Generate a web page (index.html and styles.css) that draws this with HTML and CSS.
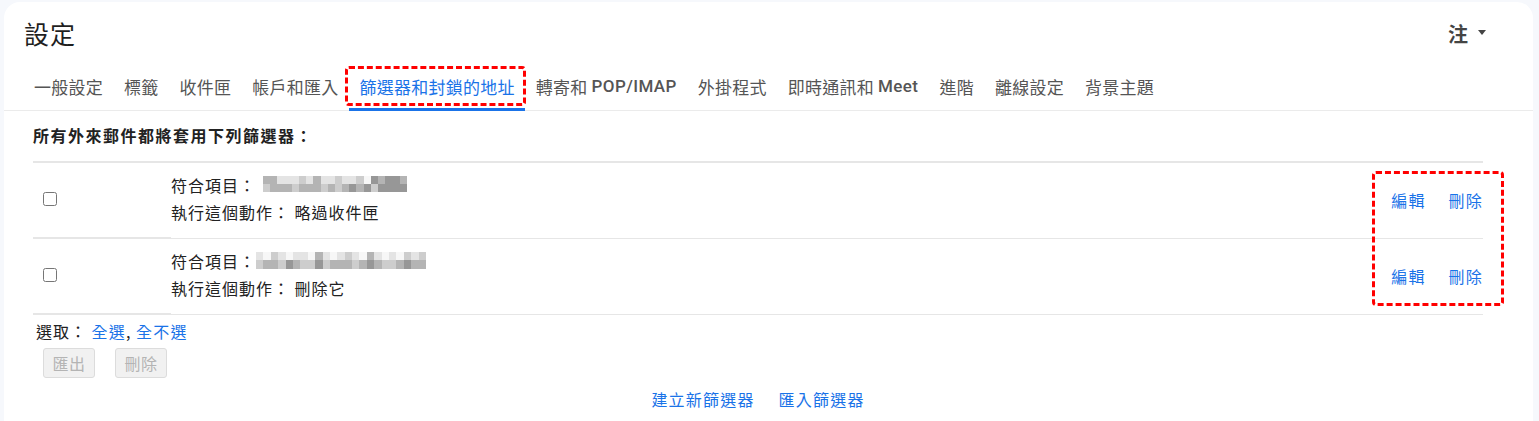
FILE: index.html
```html
<!DOCTYPE html>
<html lang="zh-Hant">
<head>
<meta charset="utf-8">
<title>設定</title>
<link rel="stylesheet" href="styles.css">
</head>
<body>
<div class="card">
  <header class="head">
    <h1 class="title">設定</h1>
    <div class="lang">注<span class="caret"></span></div>
  </header>
  <nav class="tabs">
    <a class="tab">一般設定</a>
    <a class="tab">標籤</a>
    <a class="tab">收件匣</a>
    <a class="tab">帳戶和匯入</a>
    <a class="tab active">篩選器和封鎖的地址<span class="mark mark-tab"></span></a>
    <a class="tab">轉寄和 <span class="lat">POP/IMAP</span></a>
    <a class="tab">外掛程式</a>
    <a class="tab">即時通訊和 <span class="lat">Meet</span></a>
    <a class="tab">進階</a>
    <a class="tab">離線設定</a>
    <a class="tab">背景主題</a>
  </nav>
  <main class="content">
    <div class="intro">所有外來郵件都將套用下列篩選器：</div>
    <div class="filters">
      <div class="row">
        <div class="cell-check"><input type="checkbox"></div>
        <div class="cell-desc">
          <div class="line">符合項目：<span class="mosaic m1">
            <span class="mr"><i class="s3"></i><i class="s3"></i><i class="s1"></i><i class="s1"></i><i class="s1"></i><i class="s2"></i><i class="s1"></i><i class="s3"></i><i class="s1"></i><i class="s1"></i><i class="s2"></i><i class="s1"></i><i class="s1"></i><i class="s2"></i><i class="s0"></i><i class="s4"></i><i class="s3"></i><i class="s4"></i><i class="s4"></i><i class="s3"></i></span>
            <span class="mr"><i class="s2"></i><i class="s3"></i><i class="s3"></i><i class="s3"></i><i class="s2"></i><i class="s3"></i><i class="s3"></i><i class="s3"></i><i class="s2"></i><i class="s3"></i><i class="s2"></i><i class="s3"></i><i class="s4"></i><i class="s3"></i><i class="s4"></i><i class="s2"></i><i class="s4"></i><i class="s4"></i><i class="s4"></i><i class="s4"></i></span>
          </span></div>
          <div class="line">執行這個動作： 略過收件匣</div>
        </div>
        <div class="cell-act"><a class="link">編輯</a><a class="link">刪除</a></div>
      </div>
      <div class="row">
        <div class="cell-check"><input type="checkbox"></div>
        <div class="cell-desc">
          <div class="line">符合項目：<span class="mosaic m2">
            <span class="mr"><i class="s1"></i><i class="s0"></i><i class="s2"></i><i class="s1"></i><i class="s0"></i><i class="s1"></i><i class="s1"></i><i class="s0"></i><i class="s3"></i><i class="s1"></i><i class="s0"></i><i class="s1"></i><i class="s2"></i><i class="s1"></i><i class="s0"></i><i class="s3"></i><i class="s1"></i><i class="s0"></i><i class="s1"></i><i class="s0"></i><i class="s2"></i><i class="s1"></i><i class="s2"></i></span>
            <span class="mr"><i class="s2"></i><i class="s3"></i><i class="s3"></i><i class="s2"></i><i class="s4"></i><i class="s3"></i><i class="s2"></i><i class="s2"></i><i class="s4"></i><i class="s2"></i><i class="s3"></i><i class="s3"></i><i class="s3"></i><i class="s2"></i><i class="s3"></i><i class="s4"></i><i class="s3"></i><i class="s2"></i><i class="s2"></i><i class="s3"></i><i class="s4"></i><i class="s3"></i><i class="s3"></i></span>
          </span></div>
          <div class="line">執行這個動作： 刪除它</div>
        </div>
        <div class="cell-act"><a class="link">編輯</a><a class="link">刪除</a></div>
      </div>
      <span class="mark mark-act"></span>
    </div>
    <div class="select">選取： <a class="link">全選</a>, <a class="link">全不選</a></div>
    <div class="buttons">
      <button class="btn" disabled>匯出</button>
      <button class="btn" disabled>刪除</button>
    </div>
    <div class="bottom">
      <a class="link">建立新篩選器</a>
      <a class="link">匯入篩選器</a>
    </div>
  </main>
</div>
</body>
</html>
```

FILE: styles.css
```css
html, body {
  margin: 0;
  padding: 0;
  height: 100%;
}
body {
  background: #f6f8fc;
  font-family: "Noto Sans CJK TC", "Noto Sans", sans-serif;
  color: #222;
  overflow: hidden;
}
.card {
  margin: 2px 6px 0 4px;
  background: #fff;
  border-radius: 16px 16px 0 0;
  height: calc(100% - 2px);
  box-sizing: border-box;
}
.head {
  display: flex;
  align-items: center;
  justify-content: space-between;
  height: 60px;
  padding: 2px 47px 0 20px;
  box-sizing: border-box;
}
.title {
  margin: 0;
  font-size: 25px;
  line-height: 30px;
  font-weight: 400;
  letter-spacing: 1px;
  color: #1f1f1f;
}
.lang {
  display: flex;
  align-items: center;
  font-size: 20px;
  font-weight: 700;
  color: #444;
}
.caret {
  margin-left: 10px;
  width: 0;
  height: 0;
  border-left: 4.5px solid transparent;
  border-right: 4.5px solid transparent;
  border-top: 5px solid #444;
  margin-top: -1px;
}
.tabs {
  display: flex;
  padding: 0 0 0 19.5px;
  height: 49px;
  box-sizing: border-box;
  border-bottom: 1px solid #ebebeb;
}
.tab {
  position: relative;
  display: flex;
  align-items: center;
  padding: 0 10.5px;
  height: 100%;
  box-sizing: border-box;
  font-size: 17px;
  letter-spacing: 0.25px;
  color: #555;
  white-space: pre;
}
.tab .lat {
  font-family: Roboto, "Noto Sans", sans-serif;
  font-weight: 500;
  letter-spacing: 0.4px;
  color: #555;
}
.tab.active {
  color: #1a73e8;
}
.tab.active::after {
  content: "";
  position: absolute;
  left: 0;
  right: 0;
  bottom: -1px;
  height: 3px;
  background: #1a73e8;
}
.mark {
  position: absolute;
  border: 3px dashed #f00;
  border-radius: 4px;
  pointer-events: none;
}
.mark-tab {
  left: -4px;
  right: -1px;
  top: 4px;
  bottom: 4px;
}
.content {
  padding: 0 50px 0 29px;
}
.intro {
  font-weight: 700;
  font-size: 16px;
  line-height: 24px;
  letter-spacing: 1.5px;
  padding: 12px 0 0 0;
  height: 50px;
  box-sizing: border-box;
}
.filters {
  position: relative;
  border-top: 2px solid #e6e6e6;
}
.row {
  display: flex;
  align-items: stretch;
  height: 76px;
}
.cell-check {
  width: 138px;
  flex: none;
  display: flex;
  align-items: center;
  border-bottom: 2px solid #e6e6e6;
  box-sizing: border-box;
  padding: 0 0 2px 10px;
}
.cell-check input {
  margin: 0;
  width: 14px;
  height: 14px;
}
.cell-desc {
  flex: 1;
  display: flex;
  flex-direction: column;
  justify-content: center;
  border-bottom: 1px solid #e6e6e6;
  padding-bottom: 4px;
  font-size: 16px;
  letter-spacing: 1px;
  color: #222;
}
.line {
  display: flex;
  align-items: center;
  height: 27px;
}
.cell-act {
  display: flex;
  align-items: center;
  gap: 23px;
  border-bottom: 1px solid #e6e6e6;
  padding-bottom: 2px;
}
.link {
  color: #1a73e8;
  font-size: 16px;
  letter-spacing: 1.2px;
  cursor: pointer;
}
.mosaic {
  display: inline-flex;
  flex-direction: column;
  margin-top: -2px;
}
.m1 { margin-left: 7px; }
.m2 { margin-left: 0; }
.mr {
  display: flex;
}
.mr i {
  display: block;
  width: 7.2px;
  height: 8px;
}
.m2 .mr i { width: 7.4px; height: 8.5px; }
.s0 { background: #f7f7f7; }
.s1 { background: #e4e4e4; }
.s2 { background: #cdcdcd; }
.s3 { background: #b4b4b4; }
.s4 { background: #979797; }
.mark-act {
  left: 1339px;
  right: -21px;
  top: 8px;
  bottom: 9px;
}
.select {
  font-size: 16px;
  letter-spacing: 1px;
  padding: 0 0 0 3px;
  height: 32px;
  box-sizing: border-box;
  display: flex;
  align-items: center;
  white-space: pre;
}
.buttons {
  display: flex;
  gap: 20px;
  padding: 1px 0 0 10px;
}
.btn {
  width: 52px;
  height: 30px;
  padding: 0;
  font-family: inherit;
  font-size: 16px;
  letter-spacing: 0.5px;
  color: #b4b4b4;
  background: #f1f1f1;
  border: 1px solid #dcdcdc;
  border-radius: 3px;
}
.bottom {
  display: flex;
  justify-content: center;
  gap: 24px;
  padding: 9px 0 0 0;
  line-height: 24px;
}
```
